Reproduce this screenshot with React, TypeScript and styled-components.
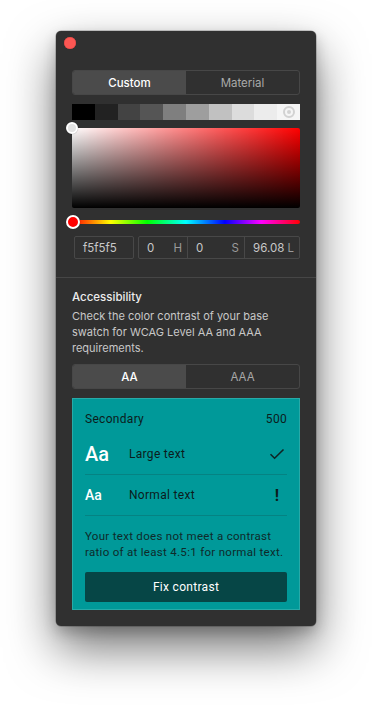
import styled, { createGlobalStyle } from "styled-components";

const GlobalStyle = createGlobalStyle`
    html, body {
        margin: 0;
        padding: 0;
        background: #ffffff;
    }
    body {
        font-family: Inter, "Liberation Sans", sans-serif;
        -webkit-font-smoothing: antialiased;
    }
`

const greys = ["#000000", "#222222", "#434343", "#555555", "#7f7f7f", "#9e9e9e", "#c1c1c1", "#dcdcdc", "#ececec", "#f5f5f5"];

type Segment = { label: string; active?: boolean };

const SegmentedTabs = ({ items }: { items: Segment[] }) => {
    return <StyledTabs>
        {items.map(item => (
            <StyledTab key={item.label} $active={item.active}>{item.label}</StyledTab>
        ))}
    </StyledTabs>
}

const CheckIcon = () => (
    <svg width="16" height="12" viewBox="0 0 16 12" fill="none">
        <path d="M1.5 6.2 L5.6 10.2 L14.5 1.5" stroke="#0f2424" strokeWidth="1.6" />
    </svg>
)

const RingIcon = () => (
    <svg width="12" height="12" viewBox="0 0 12 12">
        <circle cx="6" cy="6" r="5" fill="none" stroke="#d2d2d2" strokeWidth="2" />
        <circle cx="6" cy="6" r="2" fill="#d2d2d2" />
    </svg>
)

const App = () => {
    return <StyledPage>
        <GlobalStyle />
        <StyledWindow>
            <StyledTitleBar>
                <StyledCloseDot />
            </StyledTitleBar>
            <StyledPicker>
                <SegmentedTabs items={[{ label: "Custom", active: true }, { label: "Material" }]} />
                <StyledSwatches>
                    {greys.map((c, i) => (
                        <StyledSwatch key={c} style={{ background: c }}>
                            {i === greys.length - 1 ? <RingIcon /> : null}
                        </StyledSwatch>
                    ))}
                </StyledSwatches>
                <StyledSaturation>
                    <StyledSatPointer />
                </StyledSaturation>
                <StyledHue>
                    <StyledHueThumb />
                </StyledHue>
                <StyledInputsRow>
                    <StyledHexInput>f5f5f5</StyledHexInput>
                    <StyledHslGroup>
                        <StyledHslField $width={48}><span>0</span><StyledHslLabel>H</StyledHslLabel></StyledHslField>
                        <StyledHslField $width={57}><span>0</span><StyledHslLabel>S</StyledHslLabel></StyledHslField>
                        <StyledHslField $width={55}><span>96.08</span><StyledHslLabel>L</StyledHslLabel></StyledHslField>
                    </StyledHslGroup>
                </StyledInputsRow>
            </StyledPicker>
            <StyledSection>
                <StyledHeading>Accessibility</StyledHeading>
                <StyledDescription>
                    Check the color contrast of your base swatch for WCAG Level AA and AAA requirements.
                </StyledDescription>
                <SegmentedTabs items={[{ label: "AA", active: true }, { label: "AAA" }]} />
                <StyledCard>
                    <StyledCardHeader>
                        <span>Secondary</span>
                        <span>500</span>
                    </StyledCardHeader>
                    <StyledCheckRow>
                        <StyledSample $size={20}>Aa</StyledSample>
                        <StyledRowLabel>Large text</StyledRowLabel>
                        <CheckIcon />
                    </StyledCheckRow>
                    <StyledCheckRow>
                        <StyledSample $size={14}>Aa</StyledSample>
                        <StyledRowLabel>Normal text</StyledRowLabel>
                        <StyledBang>!</StyledBang>
                    </StyledCheckRow>
                    <StyledWarning>
                        Your text does not meet a contrast ratio of at least 4.5:1 for normal text.
                    </StyledWarning>
                    <StyledFixButton type="button">Fix contrast</StyledFixButton>
                </StyledCard>
            </StyledSection>
        </StyledWindow>
    </StyledPage>
}
export default App;

const StyledPage = styled.div`
    width: 372px;
    height: 706px;
    padding-top: 31px;
    box-sizing: border-box;
    display: flex;
    flex-direction: column;
    align-items: center;
    overflow: hidden;
`
const StyledWindow = styled.div`
    width: 260px;
    background-color: #303030;
    border-radius: 5px;
    box-shadow: 0 0 0 0.5px rgba(0, 0, 0, 0.35), 0 22px 48px rgba(0, 0, 0, 0.55), 0 6px 14px rgba(0, 0, 0, 0.2);
    padding-bottom: 16px;
`
const StyledTitleBar = styled.div`
    height: 24px;
    display: flex;
    align-items: center;
    padding-left: 8px;
`
const StyledCloseDot = styled.div`
    width: 12px;
    height: 12px;
    border-radius: 50%;
    background-color: #fc5753;
    box-shadow: inset 0 0 0 0.5px #df4744;
`
const StyledPicker = styled.div`
    padding: 15px 16px 18px;
    display: flex;
    flex-direction: column;
    border-bottom: 1px solid #464646;
`
const StyledTabs = styled.div`
    display: flex;
    height: 25px;
    border: 1px solid #474747;
    border-radius: 3px;
    box-sizing: border-box;
    overflow: hidden;
`
const StyledTab = styled.div<{ $active?: boolean }>`
    flex: 1;
    display: flex;
    align-items: center;
    justify-content: center;
    font-size: 11.5px;
    font-weight: ${p => p.$active ? 500 : 400};
    color: ${p => p.$active ? "#ffffff" : "#a9a9a9"};
    background-color: ${p => p.$active ? "#4b4b4b" : "transparent"};
`
const StyledSwatches = styled.div`
    display: flex;
    height: 16px;
    margin-top: 9px;
`
const StyledSwatch = styled.div`
    flex: 1;
    display: flex;
    align-items: center;
    justify-content: center;
`
const StyledSaturation = styled.div`
    position: relative;
    height: 80px;
    margin-top: 8px;
    border-radius: 2px;
    background:
        linear-gradient(to bottom, rgba(0, 0, 0, 0), #000000),
        linear-gradient(to right, #ffffff, rgba(255, 255, 255, 0)),
        #ff0000;
`
const StyledSatPointer = styled.div`
    position: absolute;
    left: -6px;
    top: -6px;
    width: 8px;
    height: 8px;
    border-radius: 50%;
    border: 2px solid #ffffff;
    background-color: #e2e2e2;
    box-shadow: 0 0 1px rgba(0, 0, 0, 0.4);
`
const StyledHue = styled.div`
    position: relative;
    height: 4px;
    margin-top: 12px;
    border-radius: 2px;
    background: linear-gradient(to right, #ff0000 0%, #ffff00 17%, #00ff00 33%, #00ffff 50%, #0000ff 67%, #ff00ff 83%, #ff0000 100%);
`
const StyledHueThumb = styled.div`
    position: absolute;
    left: -6px;
    top: -5px;
    width: 10px;
    height: 10px;
    border-radius: 50%;
    background-color: #ff0000;
    border: 2px solid #ffffff;
    box-shadow: 0 0 1px rgba(0, 0, 0, 0.5);
`
const StyledInputsRow = styled.div`
    display: flex;
    gap: 4px;
    margin-top: 12px;
    padding-left: 2px;
    height: 23px;
`
const StyledHexInput = styled.div`
    width: 60px;
    flex-shrink: 0;
    box-sizing: border-box;
    border: 1px solid #484848;
    border-radius: 2px;
    padding-left: 8px;
    display: flex;
    align-items: center;
    font-size: 11.5px;
    color: #c8c8c8;
`
const StyledHslGroup = styled.div`
    display: flex;
    border: 1px solid #484848;
    border-radius: 2px;
`
const StyledHslField = styled.div<{ $width: number }>`
    width: ${p => p.$width}px;
    box-sizing: border-box;
    display: flex;
    align-items: center;
    justify-content: space-between;
    padding: 0 5px 0 8px;
    font-size: 11.5px;
    color: #c8c8c8;
    & + & {
        border-left: 1px solid #484848;
    }
`
const StyledHslLabel = styled.span`
    color: #9a9a9a;
`
const StyledSection = styled.div`
    padding: 11px 16px 0;
    display: flex;
    flex-direction: column;
`
const StyledHeading = styled.div`
    font-size: 11.5px;
    line-height: 16px;
    font-weight: 500;
    color: #ececec;
`
const StyledDescription = styled.p`
    margin: 3px 0 8px;
    font-size: 11px;
    line-height: 16px;
    color: #c8c8c8;
`
const StyledCard = styled.div`
    margin-top: 9px;
    background-color: #009999;
    border: 1px solid #27aaa8;
    padding: 12px 12px 7px;
    display: flex;
    flex-direction: column;
    font-family: Roboto, "Liberation Sans", sans-serif;
`
const StyledCardHeader = styled.div`
    display: flex;
    justify-content: space-between;
    font-size: 12px;
    line-height: 16px;
    letter-spacing: 0.3px;
    color: #0c1c1c;
    margin-bottom: 7px;
`
const StyledCheckRow = styled.div`
    height: 40px;
    display: flex;
    align-items: center;
    border-bottom: 1px solid #058383;
    padding-right: 2px;
`
const StyledSample = styled.span<{ $size: number }>`
    width: 44px;
    font-size: ${p => p.$size}px;
    font-weight: 500;
    color: #ffffff;
`
const StyledRowLabel = styled.span`
    flex: 1;
    font-size: 12px;
    letter-spacing: 0.3px;
    color: #0c1c1c;
`
const StyledBang = styled.span`
    font-size: 16px;
    font-weight: 700;
    color: #0c1c1c;
    margin-right: 6px;
`
const StyledWarning = styled.p`
    margin: 12px 0 12px;
    font-size: 11.5px;
    line-height: 16px;
    letter-spacing: 0.3px;
    color: #0f2a2a;
`
const StyledFixButton = styled.button`
    height: 30px;
    border: 0;
    border-radius: 2px;
    background-color: #064646;
    color: #ffffff;
    font-family: Roboto, "Liberation Sans", sans-serif;
    font-size: 12px;
    font-weight: 400;
    letter-spacing: 0.3px;
`
